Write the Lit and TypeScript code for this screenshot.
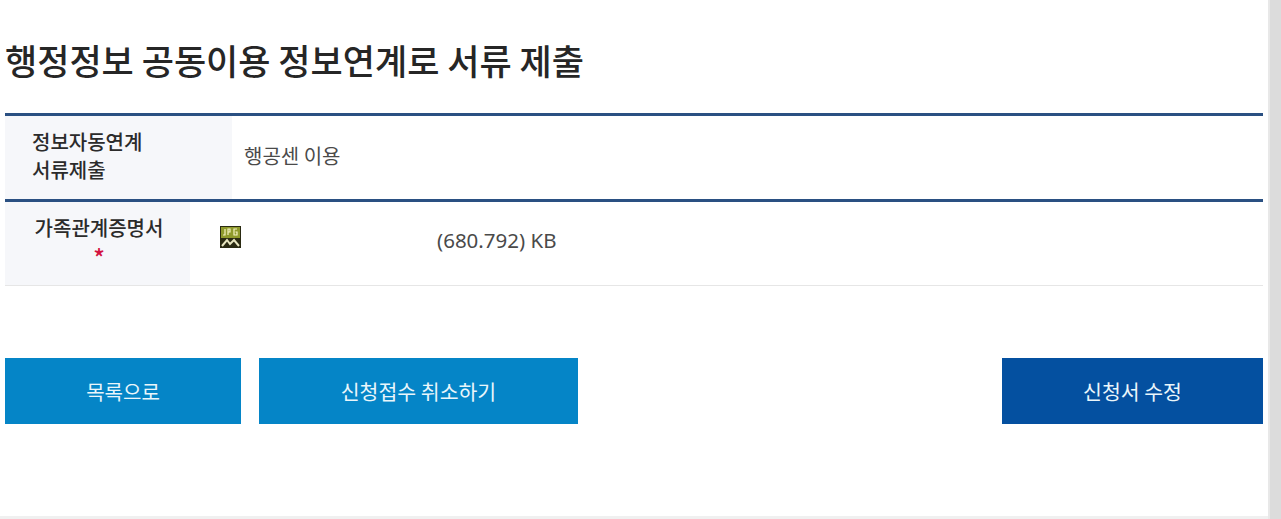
import { LitElement, html, css } from "lit";
import { customElement } from "lit/decorators.js";

@customElement("app-root")
export class AppRoot extends LitElement {
  static styles = css`
    :host {
      display: flex;
      width: 1281px;
      height: 519px;
      overflow: hidden;
      background: #fff;
      font-family: "Noto Sans CJK KR", "Noto Sans", sans-serif;
      color: #333;
    }
    .page {
      width: 1268px;
      height: 519px;
      box-sizing: border-box;
      padding: 0 5px;
      border-bottom: 3px solid #f0f0f0;
      flex: none;
    }
    .scrollbar {
      flex: 1;
      background: #dcdcdc;
      border-left: 2px solid #e8e8e8;
    }
    h1 {
      margin: 0;
      height: 113px;
      box-sizing: border-box;
      padding-top: 36px;
      font-size: 35px;
      line-height: 48px;
      font-weight: 500;
      color: #262626;
    }
    .row {
      display: flex;
      border-top: 3px solid #2a5082;
    }
    .row.first {
      height: 83px;
    }
    .row.second {
      height: 83px;
      border-bottom: 1px solid #e6e6e6;
    }
    .th {
      background: #f6f7fa;
      font-size: 20px;
      font-weight: 500;
      color: #2b2b2b;
      flex: none;
      box-sizing: border-box;
    }
    .first .th {
      width: 227px;
      padding: 12px 0 0 27px;
      line-height: 28px;
    }
    .second .th {
      width: 185px;
      padding: 13px 0 0 3px;
      line-height: 26px;
      text-align: center;
    }
    .star {
      display: block;
      margin-top: 6px;
      color: #d3123f;
      font-size: 24px;
      line-height: 20px;
    }
    .first .td {
      padding: 26px 0 0 12px;
      font-size: 20px;
      line-height: 28px;
      color: #4a4a4a;
    }
    .second .td {
      display: flex;
      align-items: flex-start;
      padding: 24px 0 0 30px;
      font-size: 20.5px;
      line-height: 28px;
      color: #4a4a4a;
    }
    .icon {
      width: 21px;
      height: 22px;
      flex: none;
      display: block;
    }
    .size {
      margin-left: 196px;
      font-family: "Noto Sans", sans-serif;
    }
    .actions {
      display: flex;
      gap: 18px;
      margin-top: 72px;
    }
    button {
      height: 66px;
      border: 0;
      padding: 0;
      border-radius: 0;
      color: #eaf6fb;
      font-family: inherit;
      font-size: 20.5px;
      background: #0585c7;
    }
    .list { width: 236px; font-size: 20px; }
    .cancel { width: 319px; }
    .edit {
      width: 261px;
      margin-left: auto;
      background: #0450a0;
    }
  `;

  render() {
    return html`
      <div class="page">
        <h1>행정정보 공동이용 정보연계로 서류 제출</h1>
        <div class="row first">
          <div class="th">정보자동연계<br />서류제출</div>
          <div class="td">행공센 이용</div>
        </div>
        <div class="row second">
          <div class="th">가족관계증명서<span class="star">*</span></div>
          <div class="td">
            <svg class="icon" viewBox="0 0 21 22" aria-hidden="true">
              <rect width="21" height="22" fill="#2a2a12" />
              <rect x="1" y="1" width="19" height="11" fill="#8f9a2c" />
              <path d="M5 3 V9 H3 M8 9 V3 H10 V6 H8 M17 3 H14 V9 H17 V6 H15.5" fill="none" stroke="#f4f2c0" stroke-width="1.2" />
              <path d="M2 20 L7 14 L10 18 L14 14 L19 20" fill="none" stroke="#e8e6c0" stroke-width="2" />
            </svg>
            <span class="size">(680.792) KB</span>
          </div>
        </div>
        <div class="actions">
          <button class="list">목록으로</button>
          <button class="cancel">신청접수 취소하기</button>
          <button class="edit">신청서 수정</button>
        </div>
      </div>
      <div class="scrollbar"></div>
    `;
  }
}
